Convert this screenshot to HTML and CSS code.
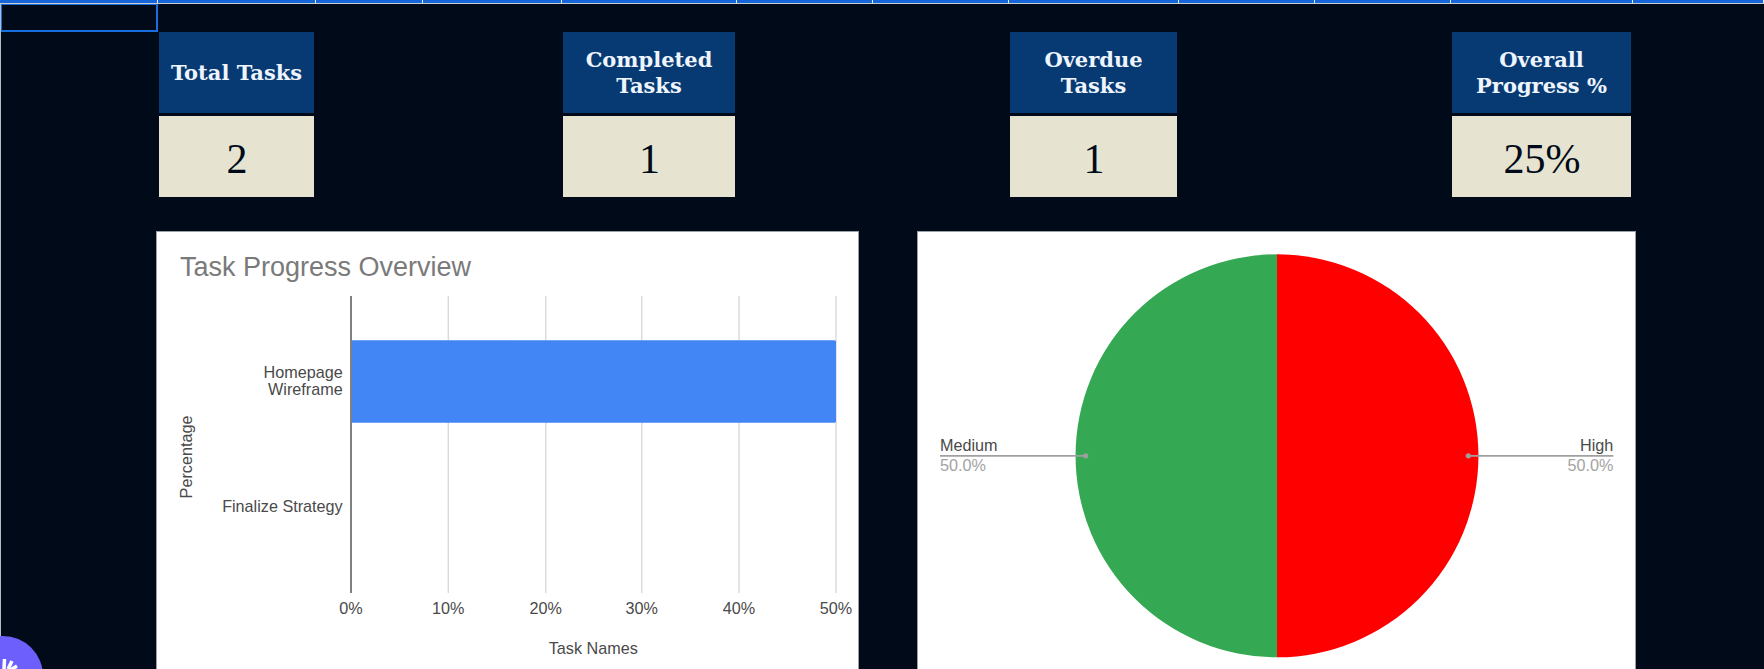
FILE: index.html
```html
<!DOCTYPE html>
<html lang="en">
<head>
    <meta charset="UTF-8">
    <meta name="viewport" content="width=device-width, initial-scale=1.0">
    <title>Task Dashboard</title>
    <link rel="stylesheet" href="styles.css">
</head>
<body>
    <!-- Column header strip -->
    <div class="col-strip">
        <span></span><span></span><span></span><span></span><span></span><span></span>
        <span></span><span></span><span></span><span></span><span></span><span></span>
    </div>

    <div class="sheet">
        <div class="selected-cell"></div>

        <div class="card card-total">
            <div class="card-head">Total Tasks</div>
            <div class="card-value">2</div>
        </div>
        <div class="card card-completed">
            <div class="card-head">Completed Tasks</div>
            <div class="card-value">1</div>
        </div>
        <div class="card card-overdue">
            <div class="card-head">Overdue<br>Tasks</div>
            <div class="card-value">1</div>
        </div>
        <div class="card card-progress">
            <div class="card-head">Overall<br>Progress %</div>
            <div class="card-value">25%</div>
        </div>
    </div>

    <!-- Charts -->
    <div class="charts">
        <div class="chart chart-bar">
            <svg width="701" height="437" viewBox="0 0 701 437">
                <text class="chart-title" x="23" y="44">Task Progress Overview</text>

                <g class="grid-lines">
                    <line x1="291.3" y1="64" x2="291.3" y2="361"/>
                    <line x1="388.7" y1="64" x2="388.7" y2="361"/>
                    <line x1="484.7" y1="64" x2="484.7" y2="361"/>
                    <line x1="582" y1="64" x2="582" y2="361"/>
                    <line x1="679" y1="64" x2="679" y2="361"/>
                </g>
                <rect class="bar" x="194" y="108.3" width="485" height="82.4" rx="1.5"/>
                <line class="axis" x1="194" y1="64" x2="194" y2="361"/>

                <text class="label end" x="185.7" y="146">Homepage</text>
                <text class="label end" x="185.7" y="162.7">Wireframe</text>
                <text class="label end" x="185.7" y="280">Finalize Strategy</text>

                <text class="label mid" x="194" y="382">0%</text>
                <text class="label mid" x="291.3" y="382">10%</text>
                <text class="label mid" x="388.7" y="382">20%</text>
                <text class="label mid" x="484.7" y="382">30%</text>
                <text class="label mid" x="582" y="382">40%</text>
                <text class="label mid" x="679" y="382">50%</text>

                <text class="label mid" x="436.3" y="422">Task Names</text>
                <text class="label mid" transform="translate(35 225) rotate(-90)">Percentage</text>
            </svg>
        </div>

        <div class="chart chart-pie">
            <svg width="717" height="437" viewBox="0 0 717 437">
                <path class="slice-medium" d="M359 22.3 A201.5 201.5 0 0 0 359 425.3 Z"/>
                <path class="slice-high" d="M359 22.3 A201.5 201.5 0 0 1 359 425.3 Z"/>

                <line class="leader" x1="22" y1="223.8" x2="167.7" y2="223.8"/>
                <circle class="leader-dot" cx="167.7" cy="223.8" r="2.6"/>
                <text class="label" x="22" y="218.7">Medium</text>
                <text class="label-sub" x="22" y="238.7">50.0%</text>

                <line class="leader" x1="550.3" y1="223.8" x2="695.3" y2="223.8"/>
                <circle class="leader-dot" cx="550.3" cy="223.8" r="2.6"/>
                <text class="label end" x="695.3" y="218.7">High</text>
                <text class="label-sub end" x="695.3" y="238.7">50.0%</text>
            </svg>
        </div>
    </div>

    <!-- Floating launcher, cut off by the window -->
    <div class="launcher">
        <svg width="46" height="33" viewBox="0 0 46 33">
            <circle class="launcher-disc" cx="3" cy="40" r="40"/>
            <g class="launcher-rays">
                <line x1="4" y1="33" x2="4.5" y2="23"/>
                <line x1="8" y1="33" x2="12" y2="25"/>
                <line x1="10" y1="34" x2="17" y2="30"/>
            </g>
        </svg>
    </div>
</body>
</html>
```
FILE: styles.css
```css
/* General styling */
body {
    margin: 0;
    height: 100vh;
    overflow: hidden;
    position: relative;
    background-color: #000a18;
    box-shadow: inset 1px 0 0 #b8bcc2;
    font-family: "Liberation Sans", Arial, sans-serif;
}

/* Column header strip */
.col-strip {
    display: grid;
    grid-template-columns: 158px 158px 107px 139px 175px 136px 136px 170px 136px 136px 182px 131px;
    height: 3px;
    background-color: #1766d9;
    border-bottom: 1px solid #c9ccd1;
}

.col-strip span {
    border-right: 1px solid #e8eaed;
}

/* Sheet cells */
.sheet {
    display: grid;
    grid-template-columns: 158px 158px 107px 139px 175px 136px 136px 170px 136px 136px 182px 131px;
    grid-template-rows: 28px 165px;
}

.selected-cell {
    grid-column: 1;
    grid-row: 1;
    height: 28px;
    margin-left: 1px;
    box-sizing: border-box;
    border: solid #1a6fe0;
    border-width: 1px 2px 2px 1px;
}

/* Stat cards */
.card {
    grid-row: 2;
    display: flex;
    flex-direction: column;
    gap: 3px;
    margin: 0 2px 0 1px;
}

.card-total { grid-column: 2; }
.card-completed { grid-column: 5; }
.card-overdue { grid-column: 8; }
.card-progress { grid-column: 11; }

.card-head, .card-value {
    height: 81px;
    box-sizing: border-box;
    display: flex;
    align-items: center;
    justify-content: center;
    text-align: center;
}

.card-head {
    background-color: #073a72;
    color: #eef5ff;
    font-family: "DejaVu Serif", serif;
    font-weight: bold;
    font-size: 21px;
    line-height: 26px;
}

.card-value {
    background-color: #e6e4d0;
    color: #000a18;
    font-family: "Liberation Serif", serif;
    font-size: 42px;
    padding: 4px 0 0 1px;
}

/* Charts */
.charts {
    display: flex;
    gap: 58px;
    margin-top: 34px;
    padding-left: 156px;
}

.chart {
    height: 438px;
    background: white;
    box-sizing: border-box;
    border: 1px solid #9aa0a6;
    border-bottom: none;
}

.chart-bar { width: 703px; }
.chart-pie { width: 719px; }

.chart svg {
    display: block;
}

.chart-title {
    font-size: 27px;
    fill: #7a7a7a;
}

.label {
    font-size: 16.2px;
    fill: #4a4a4a;
}

.label-sub {
    font-size: 16.2px;
    fill: #a3a3a3;
}

.end { text-anchor: end; }
.mid { text-anchor: middle; }

.grid-lines line {
    stroke: #d9d9d9;
    stroke-width: 1.4;
}

.axis {
    stroke: #808080;
    stroke-width: 2;
}

.bar { fill: #4285f4; }
.slice-medium { fill: #34a853; }
.slice-high { fill: #ff0000; }

.leader {
    stroke: #a0a0a0;
    stroke-width: 1.8;
}

.leader-dot { fill: #9e9e9e; }

/* Floating launcher */
.launcher {
    position: absolute;
    left: 0;
    bottom: 0;
    width: 46px;
    height: 33px;
}

.launcher svg {
    display: block;
}

.launcher-disc { fill: #6c5ffb; }

.launcher-rays line {
    stroke: white;
    stroke-width: 3.5;
}
```
